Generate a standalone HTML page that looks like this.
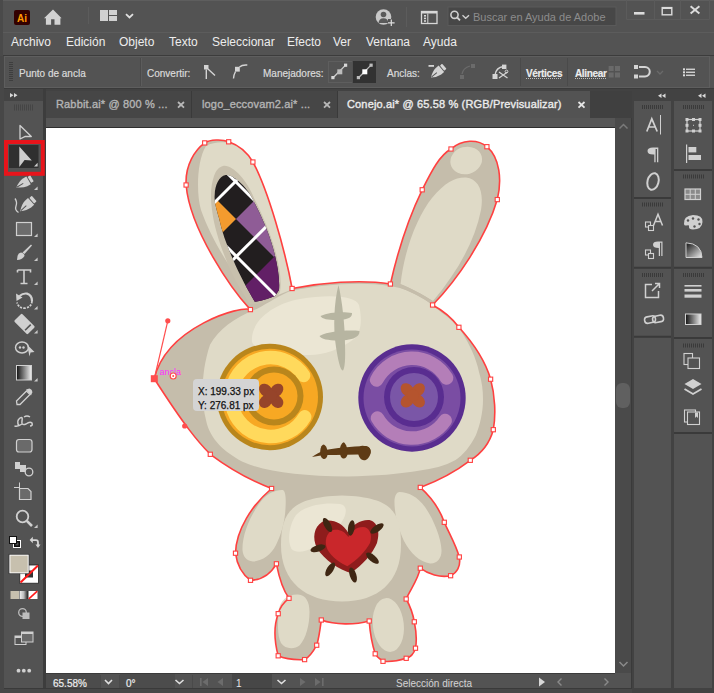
<!DOCTYPE html>
<html><head><meta charset="utf-8">
<style>
html,body{margin:0;padding:0;width:714px;height:693px;overflow:hidden;background:#535353;}
body{position:relative;font-family:"Liberation Sans",sans-serif;}
.a{position:absolute;}
.t{position:absolute;white-space:nowrap;line-height:1;}
.menu{color:#ededed;font-size:12px;top:36px;}
.ctl{color:#dadada;font-size:10px;top:68.5px;-webkit-text-stroke:0.2px #dadada;}
.tab{font-size:11px;top:98.8px;font-weight:normal;letter-spacing:0.15px;-webkit-text-stroke:0.35px currentColor;}
svg{position:absolute;overflow:visible;}
</style></head><body>
<!-- ===== TITLE BAR ===== -->
<div class="a" style="left:0;top:0;width:714px;height:32px;background:#535353;"></div>
<div class="a" style="left:0;top:0;width:714px;height:1px;background:#5e5e5e;"></div>
<svg style="left:0;top:0" width="714" height="32">
  <rect x="14" y="10" width="16" height="15" rx="2" fill="#330000"/>
  <text x="22" y="21.5" font-family="Liberation Sans" font-weight="bold" font-size="10" fill="#ff9a00" text-anchor="middle">Ai</text>
  <path d="M44 18.3 L53 9.5 L61.6 18.3 L60.4 18.3 L60.4 24.8 L54.5 24.8 L54.5 19.3 L51.1 19.3 L51.1 24.8 L45.9 24.8 L45.9 18.3 Z" fill="#d2d2d2"/>
  <rect x="88" y="7" width="1" height="17" fill="#5c5c5c"/>
  <rect x="100" y="10" width="8" height="11" fill="#d0d0d0"/>
  <rect x="109" y="10" width="8" height="5" fill="#d0d0d0"/>
  <rect x="109" y="16" width="8" height="5" fill="#d0d0d0"/>
  <path d="M126 14.2 L129.5 17.5 L133 14.2" stroke="#e0e0e0" stroke-width="1.8" fill="none"/>
  <circle cx="383.5" cy="17" r="7.8" fill="#c8c8c8"/>
  <circle cx="383.5" cy="14.5" r="2.8" fill="#5a5a5a"/>
  <path d="M378.5 23 Q379 18.5 383.5 18.3 Q388 18.5 388.5 23 Z" fill="#5a5a5a"/>
  <rect x="388" y="19" width="7" height="7" fill="#535353"/>
  <path d="M391.3 19.5 V26 M388 22.8 H394.6" stroke="#dedede" stroke-width="1.2"/>
  <rect x="406" y="7" width="1" height="20" fill="#5c5c5c"/>
  <rect x="421.5" y="11.5" width="15.5" height="12" fill="none" stroke="#d8d8d8" stroke-width="1.3"/>
  <rect x="421.5" y="11.5" width="15.5" height="2" fill="#d8d8d8"/>
  <rect x="424" y="15" width="2" height="1.6" fill="#d8d8d8"/>
  <rect x="424" y="17.6" width="2" height="1.6" fill="#d8d8d8"/>
  <rect x="424" y="20.2" width="2" height="1.6" fill="#d8d8d8"/>
  <rect x="427.3" y="13.5" width="1" height="10" fill="#d8d8d8"/>
  <!-- search -->
  <rect x="448" y="7" width="168" height="18.5" fill="#474747" stroke="#5a5a5a" stroke-width="1"/>
  <circle cx="454.5" cy="14.8" r="3.6" fill="none" stroke="#d0d0d0" stroke-width="1.6"/>
  <path d="M457.2 17.5 L460 20.3" stroke="#d0d0d0" stroke-width="1.8"/>
  <path d="M462.5 15.3 L465.7 18.3 L469 15.3" stroke="#d0d0d0" stroke-width="1.4" fill="none"/>
  <!-- window buttons -->
  <rect x="634" y="12" width="10.5" height="2.6" fill="#dcdcdc"/>
  <rect x="662.2" y="7.6" width="9.6" height="7.2" fill="none" stroke="#dcdcdc" stroke-width="1.4"/>
  <rect x="662" y="7" width="10" height="2" fill="#dcdcdc"/>
  <path d="M690.6 6.2 L699.4 13.6 M699.4 6.2 L690.6 13.6" stroke="#dcdcdc" stroke-width="1.9"/>
  <path d="M626.5 0 V19.5 M654.5 0 V19.5 M680.5 0 V19.5 M709.5 0 V19.5 M626.5 19.5 H709.5" stroke="#5b5b5b" stroke-width="1" fill="none"/>
</svg>
<div class="t" style="left:473px;top:11.6px;font-size:11px;color:#8c8c8c;">Buscar en Ayuda de Adobe</div>

<!-- ===== MENU BAR ===== -->
<div class="a" style="left:0;top:32px;width:714px;height:1px;background:#5c5c5c;"></div>
<div class="a" style="left:0;top:55px;width:714px;height:1px;background:#3c3c3c;"></div>
<div class="t menu" style="left:11px">Archivo</div>
<div class="t menu" style="left:66px">Edición</div>
<div class="t menu" style="left:119px">Objeto</div>
<div class="t menu" style="left:169px">Texto</div>
<div class="t menu" style="left:212px">Seleccionar</div>
<div class="t menu" style="left:287px">Efecto</div>
<div class="t menu" style="left:333px">Ver</div>
<div class="t menu" style="left:366px">Ventana</div>
<div class="t menu" style="left:423px">Ayuda</div>

<!-- ===== CONTROL BAR ===== -->
<div class="a" style="left:4px;top:56px;width:706px;height:32px;background:#535353;box-sizing:border-box;border:1px solid #5e5e5e;"></div>
<div class="a" style="left:0;top:88px;width:714px;height:1px;background:#3a3a3a;"></div>
<svg style="left:0;top:56px" width="714" height="33">
  <g fill="#3e3e3e">
    <rect x="9" y="6" width="4" height="1"/><rect x="9" y="8" width="4" height="1"/><rect x="9" y="10" width="4" height="1"/><rect x="9" y="12" width="4" height="1"/><rect x="9" y="14" width="4" height="1"/><rect x="9" y="16" width="4" height="1"/><rect x="9" y="18" width="4" height="1"/><rect x="9" y="20" width="4" height="1"/><rect x="9" y="22" width="4" height="1"/><rect x="9" y="24" width="4" height="1"/>
  </g>
  <rect x="140" y="2" width="1" height="28" fill="#4a4a4a"/>
  <rect x="141" y="2" width="1" height="28" fill="#5c5c5c"/>
  <!-- convert icons -->
  <rect x="204" y="9" width="4.5" height="4.5" fill="#d4d4d4"/>
  <path d="M206.3 13.5 V23 M208 13 L215 19.6" stroke="#d4d4d4" stroke-width="1.4"/>
  <rect x="235" y="10.8" width="4.8" height="4.8" fill="#d4d4d4"/>
  <path d="M239.5 11 Q242 8.6 247.3 9 M235.5 15.5 Q233.6 19 233.5 22.6" stroke="#d4d4d4" stroke-width="1.4" fill="none"/>
  <!-- handle buttons -->
  <rect x="328.5" y="5.5" width="24" height="21" fill="none" stroke="#5e5e5e" stroke-width="1"/>
  <path d="M333 21.7 L345.6 9.1" stroke="#cfcfcf" stroke-width="1.3"/>
  <rect x="331.3" y="20" width="3.2" height="3.2" fill="#d8d8d8"/>
  <rect x="344" y="7.6" width="3.2" height="3.2" fill="#d8d8d8"/>
  <rect x="337.3" y="13.3" width="5" height="5" fill="#bdbdbd"/>
  <rect x="352.7" y="5" width="23.3" height="22" fill="#323232"/>
  <path d="M358.5 21.7 L371 9.1" stroke="#bcbcbc" stroke-width="1.3"/>
  <rect x="356.8" y="20" width="3.2" height="3.2" fill="#bdbdbd"/>
  <rect x="369.5" y="7.6" width="3.2" height="3.2" fill="#bdbdbd"/>
  <rect x="362.3" y="13.3" width="5" height="5" fill="#ffffff"/>
  <!-- anchor icons -->
  <g transform="translate(437.5 16) rotate(50) scale(0.85)" fill="#d4d4d4">
    <rect x="-4" y="-10.5" width="8" height="3.5" rx="0.8"/>
    <path d="M-5 -6 L5 -6 L5 -1.5 Q4.5 4,0 10 Q-4.5 4,-5 -1.5 Z"/>
    <path d="M0 1 V9" stroke="#535353" stroke-width="1.1"/>
  </g>
  <rect x="428.5" y="9" width="5.5" height="1.8" fill="#d4d4d4"/>
  <g fill="#6b6b6b"><rect x="460" y="19" width="4" height="4"/><rect x="471" y="8" width="4" height="4"/><path d="M462 18 Q463 12 470 10" stroke="#6b6b6b" stroke-width="1.3" fill="none"/></g>
  <path d="M495 19 Q496 11.5 503.5 10.5" stroke="#d4d4d4" stroke-width="1.4" fill="none"/>
  <rect x="492.5" y="18" width="5" height="5" fill="#d4d4d4"/>
  <rect x="502" y="8.6" width="4.4" height="4.4" fill="#d4d4d4"/>
  <path d="M499 16 L507.5 22 M499 22 L507.5 16" stroke="#d4d4d4" stroke-width="1.3"/>
  <circle cx="506.5" cy="15.5" r="1.4" fill="none" stroke="#d4d4d4" stroke-width="1"/>
  <rect x="520" y="2" width="1" height="28" fill="#4a4a4a"/>
  <rect x="567" y="2" width="1" height="28" fill="#4a4a4a"/>
  <path d="M526 22.5 H561.5 M575 22.5 H606" stroke="#bdbdbd" stroke-width="1" stroke-dasharray="1,1"/>
  <g fill="#6a6a6a"><rect x="608.6" y="10" width="5" height="5"/><rect x="615" y="10" width="5" height="5"/><rect x="608.6" y="16.5" width="5" height="5"/><rect x="615" y="16.5" width="5" height="5"/></g>
  <g fill="#d4d4d4"><rect x="634" y="9" width="4" height="4"/><rect x="634" y="18.5" width="4" height="4"/></g>
  <path d="M639 11 H645 A4.75 4.75 0 0 1 645 20.5 H639" stroke="#d4d4d4" stroke-width="2" fill="none"/>
  <path d="M657 15 L660 18 L663 15" stroke="#6a6a6a" stroke-width="1.3" fill="none"/>
  <g fill="#dcdcdc"><rect x="683" y="12.3" width="2" height="2"/><rect x="683" y="15.3" width="2" height="2"/><rect x="683" y="18.3" width="2" height="2"/><rect x="686" y="12.6" width="9" height="1.3"/><rect x="686" y="15.6" width="9" height="1.3"/><rect x="686" y="18.6" width="9" height="1.3"/></g>
</svg>
<div class="t ctl" style="left:19px">Punto de ancla</div>
<div class="t ctl" style="left:147px">Convertir:</div>
<div class="t ctl" style="left:263px">Manejadores:</div>
<div class="t ctl" style="left:387px">Anclas:</div>
<div class="t ctl" style="left:526px;color:#f0f0f0;font-weight:bold;letter-spacing:-0.35px;">Vértices</div>
<div class="t ctl" style="left:575px;color:#f0f0f0;font-weight:bold;letter-spacing:-0.35px;">Alinear</div>
<!-- ===== TAB ROW ===== -->
<div class="a" style="left:0;top:89px;width:714px;height:29px;background:#424242;"></div>
<!-- inactive tabs -->
<div class="a" style="left:45px;top:91px;width:146px;height:27px;background:#464646;"></div>
<div class="a" style="left:191px;top:91px;width:1px;height:27px;background:#3a3a3a;"></div>
<div class="a" style="left:192px;top:91px;width:145px;height:27px;background:#464646;"></div>
<div class="a" style="left:337px;top:91px;width:1px;height:27px;background:#3a3a3a;"></div>
<!-- active tab -->
<div class="a" style="left:338px;top:91px;width:252px;height:27px;background:#535353;"></div>
<div class="a" style="left:590px;top:91px;width:42px;height:27px;background:#404040;"></div>
<div class="t tab" style="left:56px;color:#b4b4b4;">Rabbit.ai* @ 800 % ...</div>
<div class="t tab" style="left:202px;color:#b4b4b4;">logo_eccovam2.ai* ...</div>
<div class="t tab" style="left:347px;color:#ececec;">Conejo.ai* @ 65.58 % (RGB/Previsualizar)</div>
<svg style="left:0;top:89px" width="714" height="30">
  <path d="M178 13 L184 18.6 M184 13 L178 18.6" stroke="#b8b8b8" stroke-width="1.8"/>
  <path d="M324 13 L330 18.6 M330 13 L324 18.6" stroke="#b8b8b8" stroke-width="1.8"/>
  <path d="M578.5 13 L584.5 18.6 M584.5 13 L578.5 18.6" stroke="#e6e6e6" stroke-width="1.8"/>
</svg>
<!-- strip below tabs -->
<div class="a" style="left:45px;top:118px;width:570px;height:9px;background:#565656;"></div>
<div class="a" style="left:45px;top:127px;width:570px;height:1px;background:#2e2e2e;"></div>

<!-- ===== CANVAS ===== -->
<div class="a" style="left:46px;top:128px;width:569px;height:545px;background:#ffffff;"></div>

<!-- vertical scrollbar -->
<div class="a" style="left:615px;top:118px;width:17px;height:555px;background:#4a4a4a;"></div>
<div class="a" style="left:631px;top:118px;width:2px;height:575px;background:#3a3a3a;"></div>
<div class="a" style="left:616px;top:383px;width:14px;height:25px;background:#606060;border-radius:6px;"></div>
<svg style="left:615px;top:118px" width="17" height="560">
  <path d="M4.5 10.5 L8.5 6.5 L12.5 10.5" stroke="#7a7a7a" stroke-width="1.5" fill="none"/>
  <path d="M4.5 544 L8.5 548 L12.5 544" stroke="#8a8a8a" stroke-width="1.5" fill="none"/>
</svg>

<!-- ===== STATUS BAR ===== -->
<div class="a" style="left:45px;top:673px;width:570px;height:15px;background:#535353;"></div>
<div class="a" style="left:45px;top:673px;width:570px;height:1px;background:#3b3b3b;"></div>
<div class="a" style="left:0;top:688px;width:714px;height:5px;background:#474747;"></div>
<div class="a" style="left:0;top:688px;width:714px;height:1px;background:#3a3a3a;"></div>
<div class="a" style="left:46px;top:674px;width:54px;height:14px;background:#4c4c4c;"></div>
<div class="a" style="left:120px;top:674px;width:55px;height:14px;background:#4c4c4c;"></div>
<div class="a" style="left:232px;top:674px;width:40px;height:14px;background:#474747;"></div>
<div class="t" style="left:53px;top:678.5px;font-size:10px;color:#ececec;-webkit-text-stroke:0.2px #ececec;">65.58%</div>
<div class="t" style="left:126px;top:678.5px;font-size:10px;color:#ececec;-webkit-text-stroke:0.2px #ececec;">0°</div>
<div class="t" style="left:236px;top:678.5px;font-size:10px;color:#e8e8e8;">1</div>
<div class="t" style="left:396px;top:678.5px;font-size:10px;color:#d4d4d4;">Selección directa</div>
<svg style="left:0;top:673px" width="714" height="20">
  <path d="M100.5 2 V15 M119.5 2 V15 M192.5 2 V15" stroke="#4a4a4a" stroke-width="1"/>
  <path d="M105 7 L108.5 10.5 L112 7" stroke="#e0e0e0" stroke-width="1.6" fill="none"/>
  <path d="M175.5 7 L179.5 10.5 L183.5 7" stroke="#e0e0e0" stroke-width="1.6" fill="none"/>
  <path d="M277.5 7 L281.5 10.5 L285.5 7" stroke="#e0e0e0" stroke-width="1.6" fill="none"/>
  <g fill="#6c6c6c">
    <rect x="200" y="5" width="1.6" height="8"/><path d="M208 5 L202.5 9 L208 13 Z"/>
    <path d="M223 5 L217.5 9 L223 13 Z"/>
    <path d="M300 5 L305.5 9 L300 13 Z"/>
    <path d="M315 5 L320.5 9 L315 13 Z"/><rect x="322" y="5" width="1.6" height="8"/>
  </g>
  <path d="M539 4.5 L545 9 L539 13.5 Z" fill="#d8d8d8"/>
  <path d="M561.5 5.5 L558 9 L561.5 12.5" stroke="#8a8a8a" stroke-width="1.4" fill="none"/>
  <path d="M604.5 5.5 L608 9 L604.5 12.5" stroke="#8a8a8a" stroke-width="1.4" fill="none"/>
</svg>
<!-- ===== LEFT TOOLS PANEL ===== -->
<div class="a" style="left:0;top:0;width:3px;height:693px;background:#4a4a4a;"></div><div class="a" style="left:0;top:56px;width:4px;height:637px;background:#474747;"></div>
<div class="a" style="left:4px;top:89px;width:40px;height:12px;background:#444444;"></div>
<div class="a" style="left:4px;top:101px;width:39px;height:587px;background:#535353;"></div>
<div class="a" style="left:43px;top:89px;width:3px;height:599px;background:#3d3d3d;"></div>
<svg style="left:0;top:0" width="46" height="693">
  <path d="M10 93 L13.5 95.3 L10 97.6 Z M14 93 L17.5 95.3 L14 97.6 Z" fill="#d8d8d8"/>
  <g fill="#454545"><rect x="14" y="104.5" width="1" height="6"/><rect x="16" y="104.5" width="1" height="6"/><rect x="18" y="104.5" width="1" height="6"/><rect x="20" y="104.5" width="1" height="6"/><rect x="22" y="104.5" width="1" height="6"/><rect x="24" y="104.5" width="1" height="6"/><rect x="26" y="104.5" width="1" height="6"/><rect x="28" y="104.5" width="1" height="6"/><rect x="30" y="104.5" width="1" height="6"/><rect x="32" y="104.5" width="1" height="6"/></g>
  <!-- selection -->
  <path d="M20 125.5 L20 139 L25.3 136.3 L31.3 136.5 Z" fill="none" stroke="#d0d0d0" stroke-width="1.3" stroke-linejoin="round"/>
  <!-- red box & direct selection -->
  <rect x="6" y="142" width="36.8" height="31.8" fill="none" stroke="#e8141b" stroke-width="4"/>
  <rect x="9" y="145" width="29.5" height="23" fill="#2f2f2f"/>
  <path d="M19.3 146.5 L19.3 167 L24.6 160 L31.8 160.6 Z" fill="#cdcdcd"/>
  <path d="M34 166.4 L37.6 162.8 L37.6 166.4 Z" fill="#cdcdcd"/>
  <!-- flyout triangles -->
  <g fill="#c8c8c8">
    <path d="M34 190 L37.6 186.5 L37.6 190 Z"/>
    <path d="M34 237 L37.6 233.5 L37.6 237 Z"/>
    <path d="M34 261 L37.6 257.5 L37.6 261 Z"/>
    <path d="M34 285 L37.6 281.5 L37.6 285 Z"/>
    <path d="M34 309.5 L37.6 306 L37.6 309.5 Z"/>
    <path d="M34 333.5 L37.6 330 L37.6 333.5 Z"/>
    <path d="M34 381.5 L37.6 378 L37.6 381.5 Z"/>
    <path d="M34 528 L37.6 524.5 L37.6 528 Z"/>
  </g>
  <g fill="#d0d0d0" stroke="#d0d0d0">
  <!-- pen -->
  <g transform="translate(24 183) rotate(60) scale(0.88)" stroke="none">
    <rect x="-4" y="-10.5" width="8" height="3.5" rx="0.8"/>
    <path d="M-5 -6 L5 -6 L5 -1.5 Q4.5 4,0 10 Q-4.5 4,-5 -1.5 Z"/>
    <path d="M0 1 V9" stroke="#535353" stroke-width="1.1"/>
  </g>
  <!-- curvature pen -->
  <g transform="translate(27 205) rotate(48) scale(0.92)" stroke="none">
    <rect x="-4" y="-10.5" width="8" height="3.5" rx="0.8"/>
    <path d="M-5 -6 L5 -6 L5 -1.5 Q4.5 4,0 10 Q-4.5 4,-5 -1.5 Z"/>
    <path d="M0 1 V9" stroke="#535353" stroke-width="1.1"/>
  </g>
  <path d="M15 198.5 Q17.5 202,16 206 Q14.5 210,18.5 212.5" fill="none" stroke-width="1.3"/>
  <!-- rectangle -->
  <rect x="16.5" y="222.5" width="15" height="13" fill="#6c6c6c" stroke-width="1.2"/>
  <!-- brush -->
  <path d="M17 260 Q17 253 21 252.5 Q24.5 253 24.5 256 Q22 260 17 260 Z" stroke="none"/>
  <path d="M22.5 252.5 L31 244.5 L32 245.5 L24.5 254 Z" stroke="none"/>
  <!-- type -->
  <path d="M17.5 270 H30.5 V272.5 M17.5 272.5 V270 M24 270 V283.5 M20.5 283.5 H27.5" fill="none" stroke-width="1.6"/>
  <!-- rotate -->
  <path d="M19.5 296 Q23 293,27 293.6 Q32 295,32 301" fill="none" stroke-width="2.2"/>
  <path d="M32 301 Q31.5 307.5,24.5 308.2 Q18.5 308,17 302.5" fill="none" stroke-width="1.8" stroke-dasharray="2.2,1.2"/>
  <path d="M16 293.5 L22.5 297.5 L16.5 301 Z" stroke="none"/>
  <!-- eraser -->
  <g transform="translate(24.5 324) rotate(-45)" stroke="none">
    <rect x="-5.5" y="-9.5" width="11" height="19" rx="1.2"/>
    <rect x="-4" y="4" width="8" height="1.6" fill="#535353"/>
  </g>
  <!-- puppet/lasso -->
  <ellipse cx="22" cy="347.5" rx="6.5" ry="5.5" fill="none" stroke-width="1.4"/>
  <circle cx="20" cy="347.5" r="1.2" stroke="none"/><circle cx="23.5" cy="347.5" r="1.2" stroke="none"/>
  <path d="M27 344.5 L34.5 352 L30.5 352.5 L29.5 356.5 Z" stroke="none"/>
  <!-- gradient -->
  </g>
  <defs><linearGradient id="tg" x1="0" x2="1" y1="0" y2="0"><stop offset="0" stop-color="#111"/><stop offset="1" stop-color="#f0f0f0"/></linearGradient>
  <linearGradient id="tg2" x1="0" x2="1" y1="0" y2="0"><stop offset="0" stop-color="#f0f0f0"/><stop offset="0.5" stop-color="#bbb"/><stop offset="1" stop-color="#222"/></linearGradient></defs>
  <rect x="16.5" y="365.5" width="15" height="14.5" fill="url(#tg)" stroke="#d0d0d0" stroke-width="1"/>
  <g fill="#d0d0d0" stroke="#d0d0d0">
  <!-- eyedropper -->
  <path d="M17 404.5 L16.5 401 L26.5 391 L30 394.5 L20 404.5 Z" fill="none" stroke-width="1.3"/>
  <path d="M26 389.5 L29.5 388.5 Q32.5 389.5 32.3 392.5 L31 395.5 Z" stroke="none"/>
  <!-- blend -->
  <path d="M14.5 426 Q18 427 22 424 M19 426 Q16 421 20 418 Q23 416 22 421 Q21 426 26 424 Q30 421 32 423 Q33 426 30 426 M24 417 Q27 415 30 417" fill="none" stroke-width="1.5"/>
  <!-- rounded rect -->
  <rect x="16.5" y="439.5" width="15.5" height="12.5" rx="2.5" fill="#6a6a6a" stroke-width="1.2"/>
  <!-- live paint -->
  <rect x="15" y="462" width="5" height="7" stroke="none"/>
  <rect x="20" y="465" width="6" height="7" stroke="none"/>
  <circle cx="29" cy="472" r="3.8" fill="#535353" stroke-width="1.3"/>
  <!-- artboard -->
  <path d="M19.5 482.5 V491" fill="none" stroke-width="1"/>
  <path d="M14 487.5 H19.5" fill="none" stroke-width="1"/>
  <path d="M19.5 488.5 H28 L31 491.5 V499.5 H19.5 Z" fill="#6a6a6a" stroke-width="1.2"/>
  <!-- zoom -->
  <circle cx="22.5" cy="516.5" r="5.8" fill="none" stroke-width="1.8"/>
  <path d="M26.8 520.8 L32 526" fill="none" stroke-width="2.6"/>
  </g>
  <!-- default fill/stroke -->
  <rect x="13.5" y="540.5" width="7" height="7" fill="#111" stroke="#fff" stroke-width="1"/>
  <rect x="15.5" y="542.5" width="3" height="3" fill="#535353"/>
  <rect x="9.5" y="536.5" width="7" height="7" fill="#fff" stroke="#111" stroke-width="1"/>
  <path d="M32 540.2 H36 Q38 540.2 38 542.5 V545" fill="none" stroke="#d4d4d4" stroke-width="1.8"/>
  <path d="M29.6 540 L32.8 536.8 L32.8 543.2 Z" fill="#d4d4d4"/>
  <path d="M35.5 544.5 L40.5 544.5 L38 548 Z" fill="#d4d4d4"/>
  <!-- stroke swatch -->
  <rect x="19.8" y="565" width="18.7" height="18.2" fill="#fff" stroke="#222" stroke-width="0.8"/>
  <rect x="25" y="570.5" width="8" height="7" fill="#333"/>
  <path d="M20.5 582.5 L38 565.5" stroke="#ff1a1a" stroke-width="2"/>
  <!-- fill swatch -->
  <rect x="9.8" y="555" width="18.5" height="18" fill="#c7c0ae" stroke="#fff" stroke-width="1.2"/>
  <rect x="9" y="554.2" width="20" height="19.6" fill="none" stroke="#222" stroke-width="0.5"/>
  <!-- modes -->
  <rect x="10.5" y="591" width="8.5" height="8" fill="#c7c0ae"/>
  <rect x="19.6" y="591" width="8.2" height="8" fill="url(#tg2)"/>
  <rect x="28.6" y="591" width="8.9" height="8" fill="#fff"/>
  <path d="M28.8 598.8 L37.3 591.2" stroke="#ff1a1a" stroke-width="1.6"/>
  <!-- draw mode -->
  <circle cx="22.5" cy="612.5" r="3.8" fill="none" stroke="#bdbdbd" stroke-width="1.3"/>
  <rect x="22.5" y="612.5" width="7" height="6.5" fill="#bdbdbd"/>
  <!-- screen mode -->
  <rect x="15" y="636" width="11" height="8.5" fill="#535353" stroke="#cfcfcf" stroke-width="1"/>
  <rect x="15" y="636" width="11" height="2" fill="#cfcfcf"/>
  <rect x="21.5" y="632" width="11.5" height="10" fill="#6a6a6a" stroke="#cfcfcf" stroke-width="1"/>
  <rect x="21.5" y="632" width="11.5" height="2" fill="#cfcfcf"/>
  <!-- dots -->
  <circle cx="18.5" cy="670.7" r="1.9" fill="#d0d0d0"/><circle cx="23.8" cy="670.7" r="1.9" fill="#d0d0d0"/><circle cx="29.2" cy="670.7" r="1.9" fill="#d0d0d0"/>
</svg>

<!-- ===== RIGHT PANELS ===== -->
<div class="a" style="left:632px;top:89px;width:82px;height:604px;background:#424242;"></div>
<div class="a" style="left:634px;top:101px;width:37px;height:587px;background:#535353;"></div>
<div class="a" style="left:674px;top:101px;width:38px;height:587px;background:#535353;"></div>
<svg style="left:0;top:0" width="714" height="693">
  <path d="M665.5 93.6 L662 95.8 L665.5 98 Z M661.5 93.6 L658 95.8 L661.5 98 Z" fill="#d8d8d8"/>
  <path d="M705.5 93.6 L702 95.8 L705.5 98 Z M701.5 93.6 L698 95.8 L701.5 98 Z" fill="#d8d8d8"/>
  <g stroke="#3a3a3a" stroke-width="2">
    <path d="M634 198 H671 M634 267.7 H671 M634 336.7 H671"/>
    <path d="M674 170 H712 M674 267.7 H712 M674 338 H712 M674 433 H712"/>
  </g>
  <g fill="#3a3a3a">
    <g id="grip"><rect x="642" y="105" width="1" height="4"/><rect x="644" y="105" width="1" height="4"/><rect x="646" y="105" width="1" height="4"/><rect x="648" y="105" width="1" height="4"/><rect x="650" y="105" width="1" height="4"/><rect x="652" y="105" width="1" height="4"/><rect x="654" y="105" width="1" height="4"/><rect x="656" y="105" width="1" height="4"/><rect x="658" y="105" width="1" height="4"/><rect x="660" y="105" width="1" height="4"/><rect x="662" y="105" width="1" height="4"/></g>
    <use href="#grip" x="41" y="0"/>
    <use href="#grip" x="0" y="97.5"/>
    <use href="#grip" x="41" y="69.5"/>
    <use href="#grip" x="0" y="168"/>
    <use href="#grip" x="41" y="168"/>
    <use href="#grip" x="41" y="238.5"/>
  </g>
  <g fill="#d0d0d0" stroke="#d0d0d0">
    <!-- A| -->
    <path d="M646.8 131.5 L651.8 118.8 L657.2 131.5 M648.8 127 H655" fill="none" stroke-width="1.7"/>
    <rect x="660" y="115" width="1" height="19.5" stroke="none"/>
    <!-- transform -->
    <rect x="687" y="119.5" width="13" height="11.5" fill="none" stroke-width="1.2"/>
    <g stroke="none"><rect x="685.5" y="118" width="3" height="3"/><rect x="698.5" y="118" width="3" height="3"/><rect x="685.5" y="129.5" width="3" height="3"/><rect x="698.5" y="129.5" width="3" height="3"/><rect x="692" y="118" width="3" height="3"/><rect x="692" y="129.5" width="3" height="3"/><rect x="685.5" y="123.8" width="3" height="3"/><rect x="698.5" y="123.8" width="3" height="3"/><rect x="693" y="124.8" width="1" height="1"/></g>
    <!-- pilcrow -->
    <path d="M653 147.5 H658.3 V162.3 H657 V149 H655.6 V162.3 H654.3 V154.5 Q647.5 154.8 647.5 151 Q647.5 147.5 653 147.5 Z" stroke="none"/>
    <!-- align -->
    <rect x="686" y="144.5" width="1.2" height="18.5" stroke="none"/>
    <rect x="688.5" y="147" width="7.8" height="5.4" stroke="none"/>
    <rect x="688.5" y="155" width="12.5" height="5" stroke="none"/>
    <!-- O italic -->
    <ellipse cx="653" cy="181.5" rx="5.5" ry="8.5" transform="rotate(15 653 181.5)" fill="none" stroke-width="2"/>
    <!-- swatches -->
    <rect x="685" y="189" width="15.5" height="10.5" fill="#8a8a8a" stroke-width="1.2"/>
    <path d="M685 194.3 H700.5 M690.2 189 V199.5 M695.3 189 V199.5" fill="none" stroke-width="1"/>
    <!-- char styles -->
    <path d="M653.5 225.5 L658 214.2 L662.5 225.5 M655.3 221.5 H660.8" fill="none" stroke-width="1.5"/>
    <rect x="645.5" y="222" width="5" height="5" fill="none" stroke-width="1.1"/>
    <rect x="648.5" y="225.5" width="5" height="5" fill="#535353" stroke-width="1.1"/>
    <!-- palette -->
    <path d="M684 224 Q683 216 693 215 Q703 215 702.5 222 Q702 229.5 693 229.5 Q688.5 229.5 689 226.5 Q689.5 224.5 686.5 225.5 Q684.2 226 684 224 Z" stroke="none"/>
    <g fill="#535353" stroke="none"><circle cx="688" cy="220.5" r="1.2"/><circle cx="693" cy="218.5" r="1.2"/><circle cx="698.5" cy="219.5" r="1.2"/><circle cx="699.5" cy="224" r="1.2"/><circle cx="694.5" cy="226.5" r="1.2"/></g>
    <!-- para styles -->
    <path d="M658 241.5 H662.5 V256 H661.3 V242.8 H660 V256 H658.8 V248 Q653 248 653 244.8 Q653 241.5 658 241.5 Z" stroke="none"/>
    <rect x="645.5" y="250" width="5" height="5" fill="none" stroke-width="1.1"/>
    <rect x="648.5" y="253.5" width="5" height="5" fill="#535353" stroke-width="1.1"/>
    <!-- export -->
    <path d="M652 284.5 H645.5 V297.5 H658.5 V291" fill="none" stroke-width="1.5"/>
    <path d="M652 291 L659 284 M655 283.5 H659.5 V288" fill="none" stroke-width="1.5"/>
    <!-- link -->
    <g transform="rotate(-12 654 319)" fill="none" stroke-width="1.6"><rect x="644.5" y="315.5" width="11" height="6.5" rx="3.2"/><rect x="652.5" y="316.5" width="11" height="6.5" rx="3.2"/></g>
    <!-- stroke lines -->
    <rect x="684.5" y="285" width="17" height="1.6" stroke="none"/>
    <rect x="684.5" y="289" width="17" height="2.6" stroke="none"/>
    <rect x="684.5" y="294.5" width="17" height="3.2" stroke="none"/>
    <!-- artboards -->
    <rect x="684" y="353.5" width="8.5" height="11" fill="none" stroke-width="1.1"/>
    <rect x="688" y="358" width="11.5" height="10.5" fill="#535353" stroke-width="1.1"/>
    <!-- layers -->
    <path d="M684.5 384 L693 379 L701.5 384 L693 389 Z" stroke="none"/>
    <path d="M684.5 389 L693 394 L701.5 389" fill="none" stroke-width="1.8"/>
    <!-- asset export -->
    <rect x="684.5" y="410" width="11" height="12" fill="none" stroke-width="1.1"/>
    <rect x="687.5" y="412" width="12" height="12.5" fill="#535353" stroke-width="1.1"/>
    <path d="M695 412.5 V418 L696.5 416.5 L698 418 V412.5 Z" stroke="none"/>
  </g>
  <!-- gradient quarter -->
  <path d="M686 242.8 Q701.5 243.5 702 257.5 L686 257.5 Z" fill="url(#tg3)" stroke="#d0d0d0" stroke-width="1"/>
  <rect x="685.5" y="314" width="15.5" height="10.5" fill="url(#tg4)" stroke="#d0d0d0" stroke-width="1"/>
  <defs>
  <linearGradient id="tg3" x1="0" y1="0" x2="1" y2="1"><stop offset="0" stop-color="#111"/><stop offset="1" stop-color="#eee"/></linearGradient>
  <linearGradient id="tg4" x1="0" y1="0" x2="1" y2="0"><stop offset="0" stop-color="#111"/><stop offset="1" stop-color="#eee"/></linearGradient>
  </defs>
</svg>
<!-- ===== BUNNY ===== -->
<svg style="left:0;top:0" width="714" height="693" viewBox="0 0 714 693">
<defs>
  <clipPath id="cv"><rect x="46" y="128" width="569" height="545"/></clipPath>
  <clipPath id="egg"><path d="M225.6 175 C232 174,246 185,252.6 199 C260 213,268 230,273 248 C277 262,280 278,279 290 L275 296 C268 299,260 301,254.8 301.7 C249 292,240 276,233 259.5 C227 246,222 232,219 218 C216 208,214 200,214.7 195 C215 185,219 176,225.6 175 Z"/></clipPath>
  <path id="sil" d="M204.7 142.9 C210 139.5,222 139,228.7 141.8 C238 145,247 152,252.9 162 C268 190,285 250,292.1 288.5 C320 283,360 279,390.4 284 C398 250,410 215,422.2 189.8 C432 170,440 155,451 149 C462 139,478 139,486.9 146.7 C500 158,502 180,497.3 199.6 C486 238,457 280,432.6 305 C442 310,452 318,458.9 327.3 C475 345,485 360,490.6 379.2 C495 395,496 415,493.3 429.7 C490 442,482 453,470.3 460.3 C455 472,440 480,420.3 487.4 C432 498,440 510,444.3 522.3 C450 535,456 545,459.3 557 C461 566,457 573,450.6 575.7 C440 578,428 574,420.3 568.2 C418 580,410 590,406.2 599 C410 606,413 614,414.3 621.8 C416 630,417 640,415.5 648.2 C414 653,411 657,406.2 658.3 C398 661,390 662,383 661.3 C380 659,377 657,375.2 653.8 C372 644,370 632,369.2 621 C355 625,335 625,321.3 620 C320 630,319 638,316.7 645.2 C313 652,310 657,304.6 659.6 C295 660,285 659,278.2 655.8 C274 640,274 625,278.2 613.7 C280 607,284 602,289 598.3 C283 590,279 577,276.4 563.8 C270 575,260 580,250.5 580.3 C243 575,237 565,235.5 553.2 C236 530,252 505,271.6 488.5 C252 481,230 469,210.3 454.3 C198 442,184.7 426,154.3 378.7 C166.5 326.6,242 305,250.4 309.6 C232 290,190 230,186.1 185 C185 165,195 150,204.7 142.9 Z"/>
</defs>
<g clip-path="url(#cv)">
  <!-- silhouette -->
  <use href="#sil" fill="#c5bdab"/>
  <!-- left ear light -->
  <path fill="#dfdac7" d="M206 146 C213 142,224 141.5,230 143.5 C240 147,249 154,254 164 C268 192,285 250,293 289 L258 303 C248 290,238 279,231 268 C220 252,208 230,201 210 C196 193,197 160,206 146 Z"/>
  <!-- left ear hole -->
  <path fill="#c8c0ad" d="M223 166 C232 164,247 180,254 198 C262 214,270 232,275 250 C279 264,282 280,280 292 L276 298 C268 302,258 305,250 304 C243 294,232 276,225 257 C219 242,214 226,212 210 C210 195,211 185,214 176 C216 170,219 167,223 166 Z"/>
  <!-- checker -->
  <g clip-path="url(#egg)">
    <rect x="205" y="165" width="90" height="145" fill="#221e1f"/>
    <path d="M198.5 218.5 L217 200 L236 219 L217.5 237.5 Z" fill="#f49b2e"/>
    <path d="M236 219 L272.5 182.5 L310.5 220.5 L274 257 Z" fill="#8f5c96"/>
    <path d="M215.5 315.5 L310.5 220.5 L370 280 L275 375 Z" fill="#621f66"/>
    <g stroke="#ffffff" stroke-width="3" fill="none">
      <path d="M200 217 L250 167"/>
      <path d="M215 161 L275 221"/>
      <path d="M220 272.8 L280 212.8"/>
      <path d="M215 235 L285 305"/>
    </g>
  </g>
  <!-- right ear highlights -->
  <ellipse cx="466.2" cy="160.5" rx="16" ry="13.6" transform="rotate(-15 466.2 160.5)" fill="#dfdac7"/>
  <path fill="#dfdac7" d="M400.6 284 C404 250,418 215,432 198 C445 182,456 177,466 177.5 C479 179,484 192,481 210 C475 240,459 270,433 301 C422 294,410 288,400.6 284 Z"/>
  <!-- face -->
  <path fill="#dfdac7" d="M256.7 309 C268 303,282 294,292 290.5 C320 285,360 281,390 286 L400 288 C418 294,428 301,433.7 306.5 C445 315,455 322,461 331 C470 345,476 358,479 372 C482 382,483 390,483 400 C483 412,480 425,476 435 C470 447,463 455,455.6 460 C445 466,432 469,420 470.5 C400 474,375 476,347 476.5 C300 476,265 472,242 461.5 C225 452,210 440,206 420 C201 400,201 372,210 344.8 C218 330,235 317,256.7 309 Z"/>
  <!-- forehead highlight -->
  <path fill="#ebe6d4" d="M252 342 C250 322,272 304,300 299 C330 294,356 296,359 305 C362 318,362 332,354 339 C340 350,320 356,307 355 C290 355,270 353,262 349 C256 347,253 345,252 342 Z"/>
  <!-- ear base shadow line -->
  <path d="M400 286 C412 290,422 296,433 303" stroke="#c5bdab" stroke-width="3" fill="none"/>
  <!-- arms -->
  <path fill="#dfdac7" d="M242.5 550 C242 535,250 515,262 500 C268 493,276 489.5,283 490 C286 492,286 500,285.5 508 C285 522,281 535,276 545 C271 555,262 561,253 561.5 C246 561,243 556,242.5 550 Z"/>
  <path fill="#dfdac7" d="M399.5 492 C408 492,418 497,425 507 C434 520,441 538,441.5 550 C442 558,437 564,430 563.5 C420 562,410 553,404 541 C398 528,394 512,394.5 500 C395 495,397 492,399.5 492 Z"/>
  <!-- legs -->
  <path fill="#dfdac7" d="M278.5 612 C279.5 600,288 594,298 594.5 C306 595,309.5 602,309.5 612 C309.5 625,306 638,300 645 C294 650,285 649,281 643 C277 635,278 622,278.5 612 Z"/>
  <ellipse cx="388.3" cy="625" rx="15.5" ry="27" transform="rotate(-6 388.3 625)" fill="#dfdac7"/>
  <!-- belly -->
  <path fill="#dfdac7" d="M281 545 C281 512,292 497,342 495.5 C392 497,401 512,401 545 C401 582,378 601.5,342 601.5 C306 601.5,281 582,281 545 Z"/>
  <path fill="#ebe6d4" d="M296 515 C305 505,325 502,340 504 C350 506,347 519,332 534 C317 549,298 556,291.5 549 C287 541,289 525,296 515 Z"/>
  <!-- scar -->
  <path fill="#b7b5a1" d="M338.5 285 C342 300,345 325,345 345 C345.5 358,345 368,343 370.5 C340.5 371,338 360,336 347 C333 328,334 302,338.5 285 Z"/>
  <path fill="#b7b5a1" d="M320.5 316 C330 311.5,345 312,352 313 C352.5 318.5,345 320,336 320 C328 320,322 319,320.5 316 Z"/>
  <path fill="#b7b5a1" d="M319.5 336 C330 330.5,350 330,359.5 331 C360 338,350 340.5,338 340.5 C328 340.5,321 339,319.5 336 Z"/>
  <!-- yellow eye -->
  <circle cx="269.8" cy="397" r="53.2" fill="#b9861c"/>
  <circle cx="269.8" cy="397" r="48.2" fill="#f7a823"/>
  <path d="M233.4 383.5 A39.5 39.5 0 0 1 303.6 375.5" stroke="#ffd95c" stroke-width="13.5" fill="none" stroke-linecap="round"/>
  <path d="M233.4 410.5 A39.5 39.5 0 0 0 304.7 416.8" stroke="#ffd95c" stroke-width="13.5" fill="none" stroke-linecap="round"/>
  <circle cx="274" cy="396" r="29.5" fill="#b9861c"/>
  <circle cx="274" cy="396" r="23.5" fill="#f7a823"/>
  <g fill="#96442a"><ellipse cx="265.7" cy="390.3" rx="5.8" ry="7.4" transform="rotate(-45 265.7 390.3)"/><ellipse cx="276.7" cy="390.3" rx="5.8" ry="7.4" transform="rotate(45 276.7 390.3)"/><ellipse cx="265.7" cy="401.3" rx="5.8" ry="7.4" transform="rotate(45 265.7 401.3)"/><ellipse cx="276.7" cy="401.3" rx="5.8" ry="7.4" transform="rotate(-45 276.7 401.3)"/><circle cx="271.2" cy="395.8" r="6"/></g>
  
  <!-- purple eye -->
  <circle cx="412" cy="398" r="53.7" fill="#592d90"/>
  <circle cx="412" cy="398" r="48.5" fill="#7a4da3"/>
  <path d="M376.6 380 A40 40 0 0 1 446.6 378" stroke="#b47eb8" stroke-width="13.5" fill="none" stroke-linecap="round"/>
  <path d="M377.4 418 A40 40 0 0 0 445.2 420.5" stroke="#b47eb8" stroke-width="13.5" fill="none" stroke-linecap="round"/>
  <circle cx="414" cy="397" r="30" fill="#592d90"/>
  <circle cx="414" cy="397" r="24" fill="#7a56a7"/>
  <g fill="#b5542e"><ellipse cx="407.3" cy="389.8" rx="5.8" ry="7.4" transform="rotate(-45 407.3 389.8)"/><ellipse cx="418.3" cy="389.8" rx="5.8" ry="7.4" transform="rotate(45 418.3 389.8)"/><ellipse cx="407.3" cy="400.8" rx="5.8" ry="7.4" transform="rotate(45 407.3 400.8)"/><ellipse cx="418.3" cy="400.8" rx="5.8" ry="7.4" transform="rotate(-45 418.3 400.8)"/><circle cx="412.8" cy="395.3" r="6"/></g>
  <!-- mouth -->
  <path d="M312 457 C316 454,320 452,324 450.5 C335 448,352 446.5,366 446 C371 446.5,371.5 452,370 454.5 C355 454.5,338 455,324 455 C320 455.5,316 456.5,312 457 Z" fill="#5e3b15"/>
  <path d="M323.8 444.6 C327 446,328 452,327.5 455 C327 458,325 459.5,323.5 459 C321 458,320 455,320.2 451 C320.5 447,322 445,323.8 444.6 Z" fill="#5e3b15"/>
  <path d="M343.7 442.3 C346.5 444,347.8 450,347.6 453.5 C347.3 457,345.5 458.6,343.7 458.6 C341.5 458.6,339.8 456,339.8 451 C339.8 446.5,341.5 443,343.7 442.3 Z" fill="#5e3b15"/>
  <path d="M362 445.7 C368 445.5,371 448.5,370.6 452.5 C370.2 456.5,367 460.3,364 460.3 C360.5 460.3,358 456,358 451.5 C358 448,359.5 446,362 445.7 Z" fill="#5e3b15"/>
  <!-- heart -->
  <path fill="#8e1c1c" d="M348.4 532.7 C342 522,330 518,322 522 C314 527,312 538,317 548 C324 560,340 570,350.7 573 C362 566,373 553,377 543 C381 530,376 520,368 520 C360 520,352 525,348.4 532.7 Z"/>
  <path fill="#c9272b" d="M348.4 537 C344 530,336 528,331 531 C325 535,324 545,329 552 C334 559,341 563,347.3 566.3 C356 561,366 551,370 543 C373 534,369 527,363 527 C356 527,351 532,348.4 537 Z"/>
  <g fill="#3f2613">
    <ellipse cx="327.5" cy="525" rx="3.3" ry="7.8" transform="rotate(-28 327.5 525)"/>
    <ellipse cx="351.3" cy="528" rx="3.3" ry="7.8" transform="rotate(9 351.3 528)"/>
    <ellipse cx="377" cy="528.5" rx="3.3" ry="7.8" transform="rotate(55 377 528.5)"/>
    <ellipse cx="318" cy="548.3" rx="3.3" ry="7.8" transform="rotate(72 318 548.3)"/>
    <ellipse cx="372.5" cy="558.2" rx="3.3" ry="7.8" transform="rotate(-50 372.5 558.2)"/>
    <ellipse cx="330.2" cy="569.3" rx="3.3" ry="7.8" transform="rotate(32 330.2 569.3)"/>
    <ellipse cx="353" cy="575" rx="3.3" ry="7.8" transform="rotate(-18 353 575)"/>
  </g>
  <!-- outline -->
  <use href="#sil" fill="none" stroke="#ff4040" stroke-width="1.6"/>
  <!-- handles -->
  <path d="M154.3 378.7 L167.8 320.8" stroke="#ff4d4d" stroke-width="1.2"/>
  <circle cx="167.8" cy="320.8" r="2.6" fill="#ff4d4d"/>
  <circle cx="184.7" cy="426" r="2.6" fill="#ff4d4d"/>
  <!-- anchors -->
  <g fill="#ffffff" stroke="#ff4040" stroke-width="1.1">
    <rect x="202.6" y="140.8" width="4.2" height="4.2"/>
    <rect x="226.6" y="139.7" width="4.2" height="4.2"/>
    <rect x="250.8" y="159.9" width="4.2" height="4.2"/>
    <rect x="290.0" y="286.4" width="4.2" height="4.2"/>
    <rect x="388.3" y="281.9" width="4.2" height="4.2"/>
    <rect x="420.1" y="187.7" width="4.2" height="4.2"/>
    <rect x="448.9" y="146.9" width="4.2" height="4.2"/>
    <rect x="484.8" y="144.6" width="4.2" height="4.2"/>
    <rect x="495.2" y="197.5" width="4.2" height="4.2"/>
    <rect x="430.5" y="302.9" width="4.2" height="4.2"/>
    <rect x="456.8" y="325.2" width="4.2" height="4.2"/>
    <rect x="488.5" y="377.1" width="4.2" height="4.2"/>
    <rect x="491.2" y="427.6" width="4.2" height="4.2"/>
    <rect x="468.2" y="458.2" width="4.2" height="4.2"/>
    <rect x="418.2" y="485.3" width="4.2" height="4.2"/>
    <rect x="442.2" y="520.2" width="4.2" height="4.2"/>
    <rect x="457.2" y="554.9" width="4.2" height="4.2"/>
    <rect x="448.5" y="573.6" width="4.2" height="4.2"/>
    <rect x="418.2" y="566.1" width="4.2" height="4.2"/>
    <rect x="404.1" y="596.9" width="4.2" height="4.2"/>
    <rect x="412.2" y="619.7" width="4.2" height="4.2"/>
    <rect x="413.4" y="646.1" width="4.2" height="4.2"/>
    <rect x="404.1" y="656.2" width="4.2" height="4.2"/>
    <rect x="380.9" y="659.2" width="4.2" height="4.2"/>
    <rect x="373.1" y="651.7" width="4.2" height="4.2"/>
    <rect x="367.1" y="618.9" width="4.2" height="4.2"/>
    <rect x="319.2" y="617.9" width="4.2" height="4.2"/>
    <rect x="314.6" y="643.1" width="4.2" height="4.2"/>
    <rect x="302.5" y="657.5" width="4.2" height="4.2"/>
    <rect x="276.1" y="653.7" width="4.2" height="4.2"/>
    <rect x="276.1" y="611.6" width="4.2" height="4.2"/>
    <rect x="286.9" y="596.2" width="4.2" height="4.2"/>
    <rect x="274.3" y="561.7" width="4.2" height="4.2"/>
    <rect x="248.4" y="578.2" width="4.2" height="4.2"/>
    <rect x="233.4" y="551.1" width="4.2" height="4.2"/>
    <rect x="269.5" y="486.4" width="4.2" height="4.2"/>
    <rect x="208.2" y="452.2" width="4.2" height="4.2"/>
    <rect x="248.3" y="307.5" width="4.2" height="4.2"/>
    <rect x="184.0" y="182.9" width="4.2" height="4.2"/>
  </g>
  <rect x="150.8" y="375.2" width="7" height="7" fill="#ff4d4d"/>
  <!-- ancla label -->
  <text x="159.5" y="375" font-family="Liberation Sans" font-size="9" fill="#ff30ff">ancla</text>
  <circle cx="173.2" cy="376" r="3" fill="#ffffff" stroke="#ff4d4d" stroke-width="1.2"/>
  <circle cx="173.2" cy="376" r="1" fill="#ff4d4d"/>
</g>
</svg>
<!-- tooltip -->
<div class="a" style="left:193px;top:379px;width:66px;height:32px;background:#d4d4d4;border-radius:4px;"></div>
<div class="t" style="left:198px;top:385px;font-size:10px;color:#111;line-height:14px;-webkit-text-stroke:0.25px #111;">X: 199.33 px<br>Y: 276.81 px</div>
</body></html>
